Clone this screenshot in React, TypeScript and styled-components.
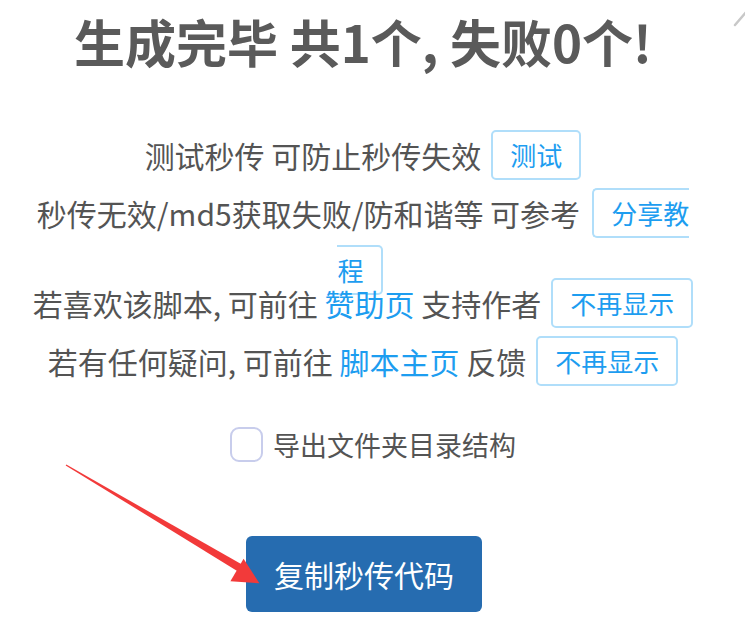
import React, { useState } from 'react'
import styled, { createGlobalStyle } from 'styled-components'

const textGray = '#545454'
const linkBlue = '#1d9df0'
const tagBorder = '#b0defa'

const GlobalStyle = createGlobalStyle`
    html, body {
        margin: 0;
        padding: 0;
        background: #fff;
    }
    body {
        font-family: 'Noto Sans CJK SC', 'Noto Sans', sans-serif;
    }
`

const App = () => {
    const [exportDirs, setExportDirs] = useState(false)

    return (
        <Page>
            <GlobalStyle />
            <CloseMark viewBox="0 0 20 20" aria-hidden>
                <line x1="2" y1="15" x2="14" y2="1" />
            </CloseMark>
            <Popup>
                <Title>生成完毕 共1个, 失败0个!</Title>
                <Content>
                    <Row>
                        <span>测试秒传 可防止秒传失效</span>
                        <TagButton>测试</TagButton>
                    </Row>
                    <Row>
                        <span>秒传无效/md5获取失败/防和谐等 可参考</span>
                        <TagHead>分享教</TagHead>
                    </Row>
                    <TailRow>
                        <TagTail>程</TagTail>
                    </TailRow>
                    <Row>
                        <span>
                            若喜欢该脚本, 可前往 <Link>赞助页</Link> 支持作者
                        </span>
                        <TagButton>不再显示</TagButton>
                    </Row>
                    <Row>
                        <span>
                            若有任何疑问, 可前往 <Link>脚本主页</Link> 反馈
                        </span>
                        <TagButton>不再显示</TagButton>
                    </Row>
                </Content>
                <CheckRow onClick={() => setExportDirs(!exportDirs)}>
                    <CheckBox checked={exportDirs} />
                    <span>导出文件夹目录结构</span>
                </CheckRow>
                <ConfirmButton>复制秒传代码</ConfirmButton>
            </Popup>
            <Arrow viewBox="0 0 745 623" aria-hidden>
                <polygon points="65.7,465.4 66.3,464.6 242,564.6 238,571.4" />
                <polygon points="230.4,581.2 243.6,558.8 259.4,583.3" />
            </Arrow>
        </Page>
    )
}

export default App

const Page = styled.div`
    position: relative;
    width: 745px;
    height: 623px;
    overflow: hidden;
`

const CloseMark = styled.svg`
    position: absolute;
    top: 10px;
    left: 733px;
    width: 20px;
    height: 20px;

    line {
        stroke: #c8c8c8;
        stroke-width: 2.5;
        stroke-linecap: round;
    }
`

const Popup = styled.div`
    width: 726px;
    padding-top: 12px;
    display: flex;
    flex-direction: column;
    align-items: center;
`

const Title = styled.h2`
    margin: 0;
    font-size: 51px;
    line-height: 59px;
    font-weight: 700;
    color: #5a5a5a;
    white-space: nowrap;
`

const Content = styled.div`
    margin-top: 55px;
    width: 100%;
    display: flex;
    flex-direction: column;
    font-size: 30px;
    color: ${textGray};
`

const Row = styled.div`
    height: 58px;
    display: flex;
    align-items: center;
    justify-content: center;
    gap: 10px;
    white-space: nowrap;
`

const TailRow = styled.div`
    height: 32px;
    display: flex;
    align-items: flex-start;
    justify-content: center;
    padding-top: 3px;
    box-sizing: border-box;
`

const Link = styled.span`
    color: ${linkBlue};
`

const TagButton = styled.span`
    display: inline-block;
    font-size: 26px;
    line-height: 36px;
    padding: 5px 17px;
    border: 2px solid ${tagBorder};
    border-radius: 5px;
    color: ${linkBlue};
    background: #fff;
    white-space: nowrap;
`

const TagHead = styled(TagButton)`
    margin-left: 2px;
    padding-right: 0;
    border-right: none;
    border-radius: 5px 0 0 5px;
`

const TagTail = styled(TagButton)`
    padding-left: 0;
    border-left: none;
    border-radius: 0 5px 5px 0;
    background: transparent;
    margin-right: 6px;
`

const CheckRow = styled.label`
    margin-top: 34px;
    height: 40px;
    display: flex;
    align-items: center;
    gap: 10px;
    font-size: 27px;
    color: ${textGray};
    cursor: pointer;
    margin-left: 20px;
`

const CheckBox = styled.span<{ checked: boolean }>`
    width: 33px;
    height: 35px;
    box-sizing: border-box;
    border: 2px solid #c8cdec;
    border-radius: 9px;
    background: ${props => (props.checked ? '#c8cdec' : '#fff')};
`

const ConfirmButton = styled.button`
    margin-top: 72px;
    width: 236px;
    height: 76px;
    border: none;
    border-radius: 6px;
    background: #266cb0;
    color: #fff;
    font-family: inherit;
    font-size: 30px;
    cursor: pointer;
    margin-left: 2px;
`

const Arrow = styled.svg`
    position: absolute;
    left: 0;
    top: 0;
    width: 745px;
    height: 623px;
    pointer-events: none;

    polygon {
        fill: #f23a3a;
    }
`
